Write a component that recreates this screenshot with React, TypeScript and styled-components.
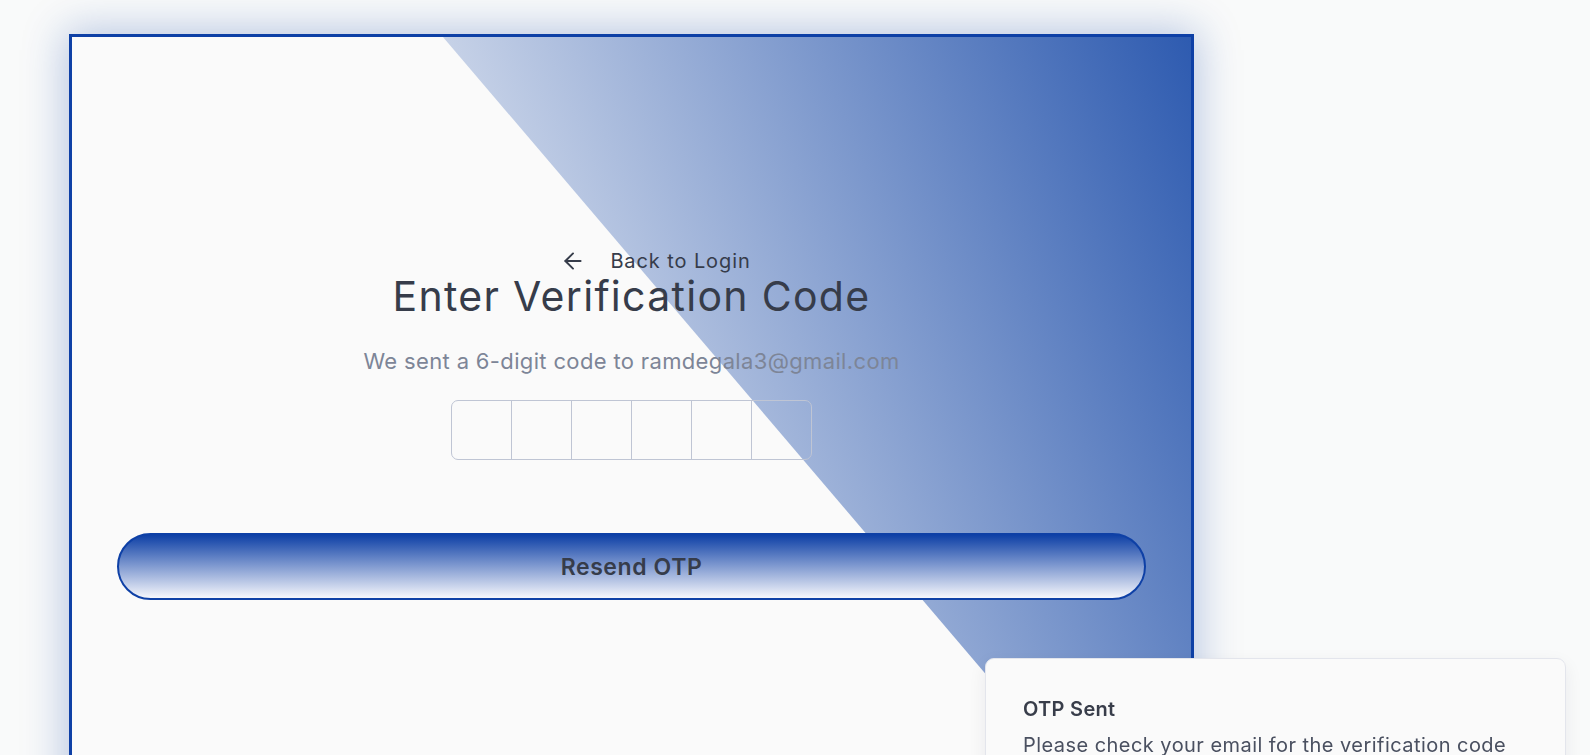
import React from "react";
import styled, { createGlobalStyle } from "styled-components";

const GlobalStyle = createGlobalStyle`
  html, body {
    margin: 0;
    padding: 0;
    background: #f9fafa;
    overflow: hidden;
    font-family: "Inter", "Liberation Sans", sans-serif;
  }
  * { box-sizing: border-box; }
`;

const Page = styled.main`
  display: grid;
  grid-template-columns: 1125px 1fr;
  padding: 34px 0 0 69px;
  min-height: 100vh;
`;

const Card = styled.section`
  position: relative;
  height: 884px;
  border: 3px solid #0e40a6;
  background: #fafafa;
  box-shadow: 0 0 40px 4px rgba(14, 64, 166, 0.28);
  overflow: hidden;
`;

const Diagonal = styled.div`
  position: absolute;
  top: 0;
  right: 0;
  bottom: 0;
  width: 66.85%;
  clip-path: polygon(0 0, 100% 0, 100% 100%);
  background: linear-gradient(68deg, #fafafa 9%, #2e5bb0 100%);
  pointer-events: none;
`;

const Content = styled.div`
  position: relative;
  z-index: 1;
  display: flex;
  flex-direction: column;
  align-items: center;
  padding: 212px 45px 0;
`;

const BackRow = styled.div`
  display: flex;
  justify-content: center;
  width: 100%;
`;

const BackLink = styled.a`
  display: flex;
  align-items: center;
  gap: 24px;
  margin-left: 48px;
  height: 24px;
  color: #363c4a;
  font-size: 20px;
  letter-spacing: 0.9px;
  text-decoration: none;
  cursor: pointer;
`;

const Title = styled.h1`
  margin: 0;
  font-size: 41px;
  line-height: 1.15;
  font-weight: 400;
  letter-spacing: 1.3px;
  color: #363c4a;
`;

const Subtitle = styled.p`
  margin: 25px 0 0;
  font-size: 22px;
  line-height: 1.5;
  color: #7d8597;
  letter-spacing: 0.35px;
`;

const OtpGroup = styled.div`
  display: flex;
  margin-top: 22px;
`;

const OtpBox = styled.input`
  width: 61px;
  height: 60px;
  margin: 0 0 0 -1px;
  padding: 0;
  border: 1px solid #bfc5d4;
  background: transparent;
  text-align: center;
  font-size: 24px;
  color: #363c4a;
  outline: none;
  &:first-child {
    margin-left: 0;
    border-radius: 7px 0 0 7px;
  }
  &:last-child {
    border-radius: 0 7px 7px 0;
  }
`;

const ResendButton = styled.button`
  margin-top: 73px;
  width: 100%;
  height: 67px;
  border: 2px solid #0e40a6;
  border-radius: 999px;
  background: linear-gradient(to bottom, #0e40a6 0%, #f6f7fc 100%);
  color: #363c4a;
  font-family: "Inter", "Liberation Sans", sans-serif;
  font-size: 23px;
  font-weight: 600;
  letter-spacing: 0.6px;
  cursor: pointer;
`;

const Toast = styled.div`
  position: fixed;
  top: 658px;
  right: 24px;
  width: 581px;
  padding: 36px 37px;
  background: #fafafa;
  border: 1px solid #e3e5ec;
  border-radius: 9px;
  box-shadow: 0 6px 18px rgba(20, 30, 60, 0.07);
  display: flex;
  flex-direction: column;
  gap: 8px;
`;

const ToastTitle = styled.div`
  font-size: 20px;
  line-height: 28px;
  font-weight: 600;
  letter-spacing: 0.3px;
  color: #383d4a;
`;

const ToastBody = styled.div`
  font-size: 20px;
  line-height: 28px;
  font-weight: 400;
  color: #4a5060;
  letter-spacing: 0.45px;
`;

const ArrowIcon = () => (
  <svg width="26" height="26" viewBox="0 0 24 24" fill="none" stroke="currentColor" strokeWidth="1.8" strokeLinecap="round" strokeLinejoin="round">
    <path d="m12 19-7-7 7-7" />
    <path d="M19 12H5" />
  </svg>
);

export default function App() {
  return (
    <>
      <GlobalStyle />
      <Page>
        <Card>
          <Diagonal />
          <Content>
            <BackRow>
              <BackLink>
                <ArrowIcon />
                <span>Back to Login</span>
              </BackLink>
            </BackRow>
            <Title>Enter Verification Code</Title>
            <Subtitle>We sent a 6-digit code to ramdegala3@gmail.com</Subtitle>
            <OtpGroup>
              {[0, 1, 2, 3, 4, 5].map((i) => (
                <OtpBox key={i} maxLength={1} inputMode="numeric" aria-label={`Digit ${i + 1}`} />
              ))}
            </OtpGroup>
            <ResendButton>Resend OTP</ResendButton>
          </Content>
        </Card>
      </Page>
      <Toast>
        <ToastTitle>OTP Sent</ToastTitle>
        <ToastBody>Please check your email for the verification code</ToastBody>
      </Toast>
    </>
  );
}
